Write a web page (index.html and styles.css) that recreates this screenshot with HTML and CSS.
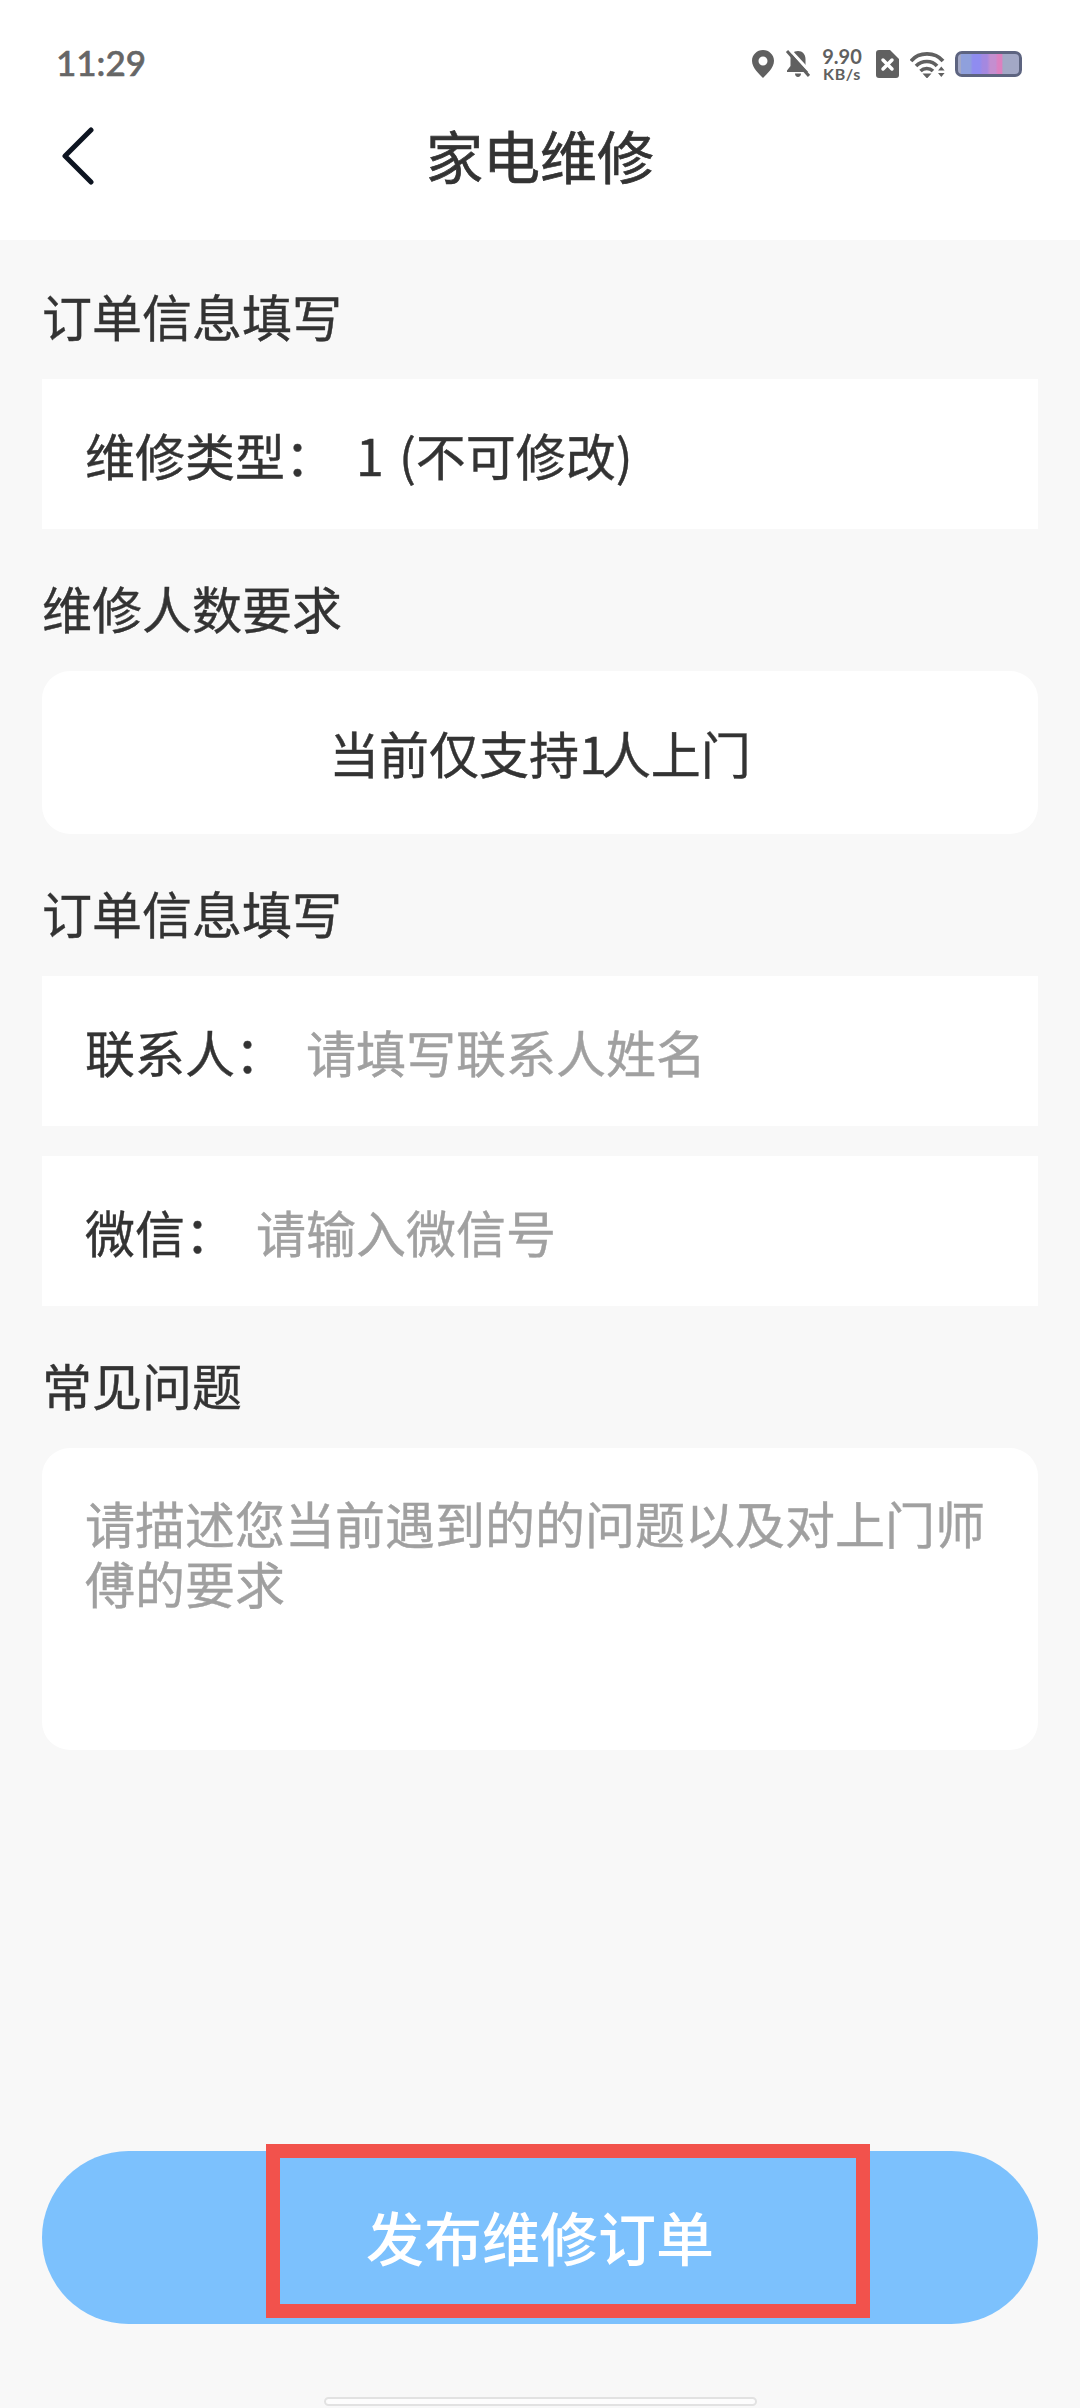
FILE: index.html
```html
<!DOCTYPE html>
<html lang="zh-CN">
<head>
    <meta charset="UTF-8">
    <meta name="viewport" content="width=device-width, initial-scale=1.0">
    <title>家电维修</title>
    <link rel="stylesheet" href="styles.css">
</head>
<body>
    <header class="top">
        <div class="status-bar">
            <span class="time">11:29</span>
            <div class="status-icons">
                <svg class="icon-pin" width="22" height="28" viewBox="0 0 22 28"><path fill-rule="evenodd" d="M11 0C5 0 0 4.800 0 10.800 0 18 7.500 24.500 11 28c3.500-3.500 11-10 11-17.200C22 4.800 17 0 11 0zm0 6.500a4.500 4.500 0 1 1 0 9 4.500 4.500 0 0 1 0-9z" fill="#606060"/></svg>
                <svg class="icon-bell" width="25" height="28" viewBox="0 0 25 28"><path d="M13 1C8.500 1 5.500 4.500 5.500 9v7L2 20.500V22h22v-1.500L20.500 16V9C20.500 4.500 17.500 1 13 1zM10 23.500c0 2 1.300 3.500 3 3.500s3-1.500 3-3.500z" fill="#606060"/><path d="M4 -1 27 24" stroke="#fff" stroke-width="3"/><path d="M2 1 24 26" stroke="#606060" stroke-width="3"/></svg>
                <div class="speed"><span>9.90</span><span class="speed-unit">KB/s</span></div>
                <svg class="icon-sim" width="23" height="28" viewBox="0 0 23 28"><path d="M3 0h11l9 9v16a3 3 0 0 1-3 3H3a3 3 0 0 1-3-3V3a3 3 0 0 1 3-3z" fill="#606060"/><path d="M7 10l9 9M16 10l-9 9" stroke="#fff" stroke-width="3.500" stroke-linecap="round"/></svg>
                <svg class="icon-wifi" width="35" height="26" viewBox="0 0 35 26"><g fill="none" stroke="#606060" stroke-width="3.600"><path d="M1 9C9 -.5 25 -.5 33 9"/><path d="M6 14c6-6 16-6 21 0"/><path d="M10.500 19c3.500-3.300 9-3.300 12.500 0"/></g><path d="M12.500 21.500h9L17 26.500zM28 18.500l3.300-4 3.300 4zM28 21h6.600l-3.300 4z" fill="#606060"/></svg>
                <div class="battery"><div class="battery-fill"></div></div>
            </div>
        </div>
        <div class="title-bar">
            <svg class="back" width="32" height="58" viewBox="0 0 32 58"><path d="M29 3 3 29l26 26" fill="none" stroke="#0d1420" stroke-width="5" stroke-linecap="round" stroke-linejoin="round"/></svg>
            <h1 class="title">家电维修</h1>
        </div>
    </header>

    <main class="content">
        <h2 class="section-title first">订单信息填写</h2>
        <div class="row">
            <span class="label">维修类型：</span>
            <span class="value">1 (不可修改)</span>
        </div>

        <h2 class="section-title">维修人数要求</h2>
        <div class="people-card"><span>当前仅支持<span class="narrow-digit">1</span>人上门</span></div>

        <h2 class="section-title">订单信息填写</h2>
        <div class="row">
            <span class="label">联系人：</span>
            <span class="placeholder">请填写联系人姓名</span>
        </div>
        <div class="row row-next">
            <span class="label">微信：</span>
            <span class="placeholder">请输入微信号</span>
        </div>

        <h2 class="section-title">常见问题</h2>
        <div class="problem-card">
            <span class="placeholder">请描述您当前遇到的的问题以及对上门师傅的要求</span>
        </div>
    </main>

    <footer class="bottom">
        <button class="submit" type="button">发布维修订单</button>
        <div class="highlight"></div>
        <div class="home-bar"></div>
    </footer>
</body>
</html>
```

FILE: styles.css
```css
* {
    box-sizing: border-box;
}

html, body {
    margin: 0;
    height: 100%;
}

body {
    width: 1080px;
    height: 2408px;
    display: flex;
    flex-direction: column;
    background-color: #f8f8f8;
    color: #333;
    font-family: "Noto Sans CJK SC", "Noto Sans", sans-serif;
    font-weight: 400;
    -webkit-text-stroke: 0.4px currentColor; /* the phone font is a little heavier than Regular */
    overflow: hidden;
}

.top {
    height: 240px;
    background-color: #fff;
}

.status-bar {
    height: 90px;
    padding: 40px 58px 0 56px;
    display: flex;
    justify-content: space-between;
    align-items: flex-start;
}

.time {
    font-family: Lato, sans-serif;
    font-size: 35px;
    line-height: 44px;
    font-weight: 500;
    -webkit-text-stroke: 0.6px currentColor;
    color: #666;
}

.status-icons {
    display: flex;
    align-items: flex-start;
    padding-top: 10px;
}

.icon-bell {
    margin-left: 11px;
}

.speed {
    width: 44px;
    margin: -3px 0 0 10px;
    display: flex;
    flex-direction: column;
    align-items: center;
    font-family: Lato, sans-serif;
    font-size: 20px;
    line-height: 18px;
    font-weight: 700;
    -webkit-text-stroke: 0;
    color: #606060;
}

.speed-unit {
    font-size: 16px;
    line-height: 17px;
    letter-spacing: 0.6px;
}

.icon-sim {
    margin-left: 12px;
}

.icon-wifi {
    margin: 2px 0 0 11px;
}

.battery {
    width: 67px;
    height: 26px;
    margin: 1px 0 0 10px;
    border: 3px solid #5d6480;
    border-radius: 7px;
    background-color: #a3a8c6;
    overflow: hidden;
}

.battery-fill {
    width: 42px;
    height: 100%;
    margin-left: 3px;
    background-image: linear-gradient(90deg, #8fa0dc 0 22%, #8f8cf0 28% 44%, #a488e0 52% 62%, #c48ed0 70% 82%, #dc80c0 88% 97%, #a3a8c6 100%);
}

.title-bar {
    height: 150px;
    position: relative;
}

.back {
    position: absolute;
    left: 62px;
    top: 37px;
}

.title {
    width: 100%;
    margin: 0;
    padding-top: 24px;
    text-align: center;
    font-size: 57px;
    line-height: 80px;
    font-weight: 400;
    -webkit-text-stroke: 0.7px currentColor;
    color: #333;
}

.content {
    flex: 1;
    padding: 0 42px;
}

.section-title {
    margin: 0;
    height: 142px;
    padding-top: 43px;
    font-size: 50px;
    line-height: 70px;
    font-weight: 400;
    color: #333;
}

.section-title.first {
    height: 139px;
    padding-top: 40px;
}

.row {
    height: 150px;
    padding-left: 43px;
    display: flex;
    align-items: center;
    background-color: #fff;
    font-size: 50px;
}

.row-next {
    margin-top: 30px;
}

.label {
    margin-right: 21px;
    color: #333;
}

.value {
    word-spacing: 4px;
    color: #333;
}

.placeholder {
    color: #a0a0a0;
}

.people-card {
    height: 163px;
    padding-bottom: 2px;
    display: flex;
    align-items: center;
    justify-content: center;
    background-color: #fff;
    border-radius: 28px;
    font-size: 50px;
    color: #333;
}

.narrow-digit {
    letter-spacing: -6px;
}

.problem-card {
    height: 302px;
    padding: 44px 43px 0;
    background-color: #fff;
    border-radius: 28px;
    font-size: 50px;
    line-height: 60px;
}

.bottom {
    height: 257px;
    position: relative;
}

.submit {
    display: block;
    width: 996px;
    height: 173px;
    margin: 0 42px;
    padding-bottom: 4px;
    border: none;
    border-radius: 87px;
    background-color: #7cc1fd;
    color: #fff;
    font-family: inherit;
    font-size: 58px;
    font-weight: 500;
    -webkit-text-stroke: 0;
}

.highlight {
    position: absolute;
    left: 266px;
    top: -7px;
    width: 604px;
    height: 174px;
    border: 14px solid #f2524c;
}

.home-bar {
    position: absolute;
    left: 324px;
    top: 246px;
    width: 433px;
    height: 9px;
    border: 2px solid #e2e2e2;
    border-radius: 5px;
    background-color: #fdfdfd;
}
```
